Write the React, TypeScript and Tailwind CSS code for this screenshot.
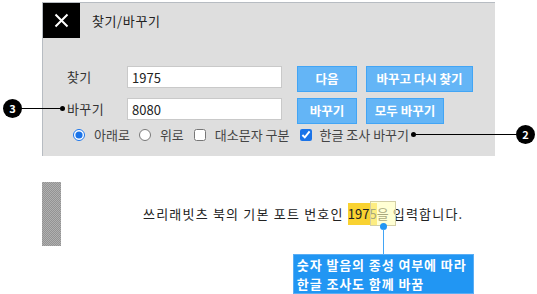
import React from "react";

function Callout({ n }: { n: string }) {
  return (
    <span className="flex h-[19px] w-[19px] items-center justify-center rounded-full bg-black text-[11px] font-bold leading-none text-white">
      {n}
    </span>
  );
}

export default function App() {
  return (
    <div className="relative h-[294px] w-[537px] overflow-hidden bg-white pt-[2px] font-['Noto_Sans_CJK_KR',sans-serif] text-[13px] text-[#222]">
      {/* dialog */}
      <div className="ml-[42px] h-[154px] w-[453px] border-l border-t border-[#b7bcc2] bg-[#dedede]">
        <div className="flex h-[35px] items-center">
          <div className="flex h-[35px] w-[37px] items-center justify-center bg-black">
            <svg width="15" height="15" viewBox="0 0 15 15">
              <path d="M1.5 1.5 L13.5 13.5 M13.5 1.5 L1.5 13.5" stroke="#fff" strokeWidth="2" />
            </svg>
          </div>
          <span className="ml-[12px] text-[13px] tracking-[0.6px] text-[#222]">찾기/바꾸기</span>
        </div>

        <div className="mt-[28px] grid grid-cols-[60px_155px_auto] items-start gap-y-[6px] pl-[24px]">
          <span className="flex h-[22px] items-center tracking-[0.4px] text-[#333]">찾기</span>
          <input
            readOnly
            value="1975"
            className="h-[22px] w-[155px] border border-[#c9c9c9] bg-white pl-[4px] text-[13px] text-[#222] outline-none"
          />
          <div className="ml-[15px] flex gap-[9px]">
            <button className="h-[26px] w-[60px] border border-[#42a5f5] bg-[#64b5f6] text-[12.5px] font-bold text-white">
              다음
            </button>
            <button className="h-[26px] w-[107px] border border-[#42a5f5] bg-[#64b5f6] text-[12.5px] font-bold text-white">
              바꾸고 다시 찾기
            </button>
          </div>

          <span className="flex h-[22px] items-center tracking-[0.4px] text-[#333]">바꾸기</span>
          <input
            readOnly
            value="8080"
            className="h-[22px] w-[155px] border border-[#c9c9c9] bg-white pl-[4px] text-[13px] text-[#222] outline-none"
          />
          <div className="ml-[15px] flex gap-[9px]">
            <button className="h-[26px] w-[60px] border border-[#42a5f5] bg-[#64b5f6] text-[12.5px] font-bold text-white">
              바꾸기
            </button>
            <button className="h-[26px] w-[78px] border border-[#42a5f5] bg-[#64b5f6] text-[12.5px] font-bold text-white">
              모두 바꾸기
            </button>
          </div>
        </div>

        <div className="mt-[3px] flex h-[16px] items-center pl-[30px] text-[#444]">
          <input type="radio" readOnly checked className="m-0 h-[12px] w-[12px] accent-[#1a73e8]" />
          <span className="ml-[9px]">아래로</span>
          <input type="radio" readOnly checked={false} className="m-0 ml-[9px] h-[12px] w-[12px]" />
          <span className="ml-[9px]">위로</span>
          <input type="checkbox" readOnly checked={false} className="m-0 ml-[10px] h-[12px] w-[12px]" />
          <span className="ml-[9px]">대소문자 구분</span>
          <input type="checkbox" readOnly checked className="m-0 ml-[10px] h-[12px] w-[12px] accent-[#1a73e8]" />
          <span className="ml-[8px]">한글 조사 바꾸기</span>
        </div>
      </div>

      {/* callout 3 */}
      <div className="absolute left-[3px] top-[99px] flex items-center">
        <Callout n="3" />
        <span className="h-px w-[38px] bg-black" />
        <span className="h-[5px] w-[5px] rounded-full bg-black" />
      </div>

      {/* callout 2 */}
      <div className="absolute left-[411px] top-[125px] flex items-center">
        <span className="h-[5px] w-[5px] rounded-full bg-black" />
        <span className="h-px w-[100px] bg-black" />
        <Callout n="2" />
      </div>

      {/* document preview */}
      <div className="mt-[26px] flex items-center">
        <div className="ml-[42px] h-[64px] w-[19px] bg-[repeating-conic-gradient(#939393_0%_25%,#b0b0b0_0%_50%)] bg-[length:2px_2px]" />
        <p className="ml-[82px] flex items-center text-[13px] text-[#222]">
          <span className="tracking-[1.2px]">쓰리래빗츠 북의 기본 포트 번호인&nbsp;</span>
          <span className="relative inline-block">
            <span className="inline-block bg-[#f9d231] leading-[22px]">1975</span>
            <span>을</span>
            <span className="absolute left-[22px] top-[-2px] h-[25px] w-[26px] border border-[#d3cfa6] bg-[#ffffb8]/60" />
            <span className="absolute left-[32px] top-[20px] h-[7px] w-[7px] rounded-full bg-[#2196f3]" />
            <span className="absolute left-[35px] top-[26px] h-[29px] w-[1.5px] bg-[#42a5f5]" />
            <span className="absolute left-[-55px] top-[51px] w-[181px] border border-[#5aaef5] bg-[#2196f3] pl-[3px] text-[13px] font-bold leading-[19px] tracking-[0.9px] whitespace-nowrap text-white">
              숫자 발음의 종성 여부에 따라
              <br />
              한글 조사도 함께 바꿈
            </span>
          </span>
          <span className="tracking-[1.2px]">&nbsp;입력합니다.</span>
        </p>
      </div>
    </div>
  );
}
